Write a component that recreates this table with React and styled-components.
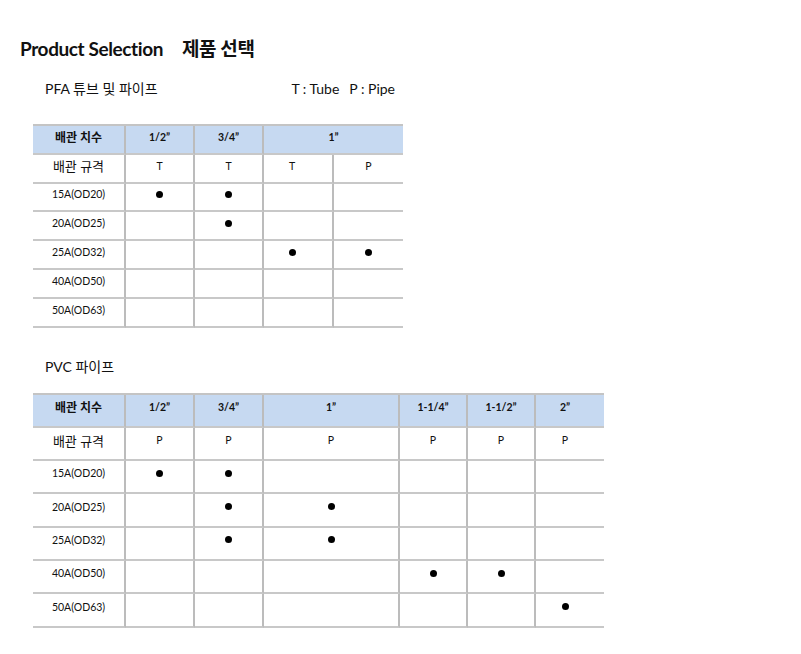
import styled, { createGlobalStyle } from 'styled-components'

const GlobalStyle = createGlobalStyle`
    body {
        margin: 0;
        background: #fff;
        font-family: Lato, "Noto Sans CJK KR", sans-serif;
        color: #111;
    }
`

const Page = styled.div`
    width: 801px;
    height: 654px;
    box-sizing: border-box;
    padding: 36px 0 0 20px;
`

const Title = styled.h1`
    margin: 0;
    font-size: 19px;
    font-weight: 700;
    line-height: 26px;
    letter-spacing: -0.4px;
    display: flex;
    gap: 19px;
`

const SectionHead = styled.div`
    display: flex;
    align-items: center;
    width: 350px;
    margin: ${p => p.$top}px 0 0 25px;
    font-size: 14px;
    line-height: 20px;
    justify-content: space-between;
`

const Legend = styled.span`
    & > span + span { margin-left: 10px; }
`

const Table = styled.div`
    display: grid;
    grid-template-columns: ${p => p.$cols};
    grid-auto-rows: ${p => p.$row}px;
    margin: ${p => p.$top}px 0 0 13px;
    width: ${p => p.$width}px;
    border-top: 2px solid #c4c4c4;
`

const Cell = styled.div`
    grid-column: span ${p => p.$span || 1};
    display: flex;
    align-items: center;
    justify-content: center;
    box-sizing: border-box;
    padding-bottom: ${p => p.$lift}px;
    padding-right: ${p => p.$shift || 0}px;
    border-bottom: 2px solid #c8c8c8;
    border-right: ${p => (p.$last ? 'none' : '2px solid #bcbcbc')};
    background: ${p => (p.$head ? '#c6d9f1' : '#fff')};
    font-size: ${p => (p.$big ? 13 : 10.5)}px;
    font-weight: ${p => (p.$head ? 700 : 400)};
    white-space: nowrap;
`

const HeadLabel = styled.span`
    font-size: 12px;
`

const Dot = styled.span`
    width: 7px;
    height: 7px;
    border-radius: 50%;
    background: #000;
`

const sizes = ['15A(OD20)', '20A(OD25)', '25A(OD32)', '40A(OD50)', '50A(OD63)']

const pfa = {
    cols: '93px 69px 69px 70px 69px',
    head: [['1/2\u201d', 1], ['3/4\u201d', 1], ['1\u201d', 2]],
    kind: ['T', 'T', 'T', 'P'],
    shift: [0, 0, 12, 0],
    marks: [
        [1, 1, 0, 0],
        [0, 1, 0, 0],
        [0, 0, 1, 1],
        [0, 0, 0, 0],
        [0, 0, 0, 0],
    ],
}

const pvc = {
    cols: '93px 69px 69px 136px 68px 68px 68px',
    head: [['1/2\u201d', 1], ['3/4\u201d', 1], ['1\u201d', 1], ['1-1/4\u201d', 1], ['1-1/2\u201d', 1], ['2\u201d', 1]],
    kind: ['P', 'P', 'P', 'P', 'P', 'P'],
    shift: [0, 0, 0, 0, 0, 10],
    marks: [
        [1, 1, 0, 0, 0, 0],
        [0, 1, 1, 0, 0, 0],
        [0, 1, 1, 0, 0, 0],
        [0, 0, 0, 1, 1, 0],
        [0, 0, 0, 0, 0, 1],
    ],
}

function SizeTable({ data, row, width, top, lift }) {
    const n = data.kind.length
    const headShift = data.head.length === n ? data.shift : []
    return (
        <Table $cols={data.cols} $row={row} $width={width} $top={top}>
            <Cell $head $lift={lift}><HeadLabel>배관 치수</HeadLabel></Cell>
            {data.head.map(([label, span], i) => (
                <Cell key={label} $head $span={span} $lift={lift} $shift={headShift[i]} $last={i === data.head.length - 1}>
                    {label}
                </Cell>
            ))}
            <Cell $big $lift={lift}>배관 규격</Cell>
            {data.kind.map((k, i) => (
                <Cell key={i} $lift={lift} $shift={data.shift[i]} $last={i === n - 1}>{k}</Cell>
            ))}
            {sizes.map((s, r) => (
                <>
                    <Cell key={s} $lift={lift}>{s}</Cell>
                    {data.marks[r].map((m, i) => (
                        <Cell key={s + i} $lift={lift} $shift={data.shift[i]} $last={i === n - 1}>
                            {m ? <Dot /> : null}
                        </Cell>
                    ))}
                </>
            ))}
        </Table>
    )
}

function App() {
    return (
        <Page>
            <GlobalStyle />
            <Title>
                <span>Product Selection</span>
                <span>제품 선택</span>
            </Title>
            <SectionHead $top={17}>
                <span>PFA 튜브 및 파이프</span>
                <Legend>
                    <span>T : Tube</span>
                    <span>P : Pipe</span>
                </Legend>
            </SectionHead>
            <SizeTable data={pfa} row={28.8} width={370} top={25} lift={5} />
            <SectionHead $top={29}>
                <span>PVC 파이프</span>
            </SectionHead>
            <SizeTable data={pvc} row={33.3} width={571} top={16} lift={7} />
        </Page>
    )
}

export default App
